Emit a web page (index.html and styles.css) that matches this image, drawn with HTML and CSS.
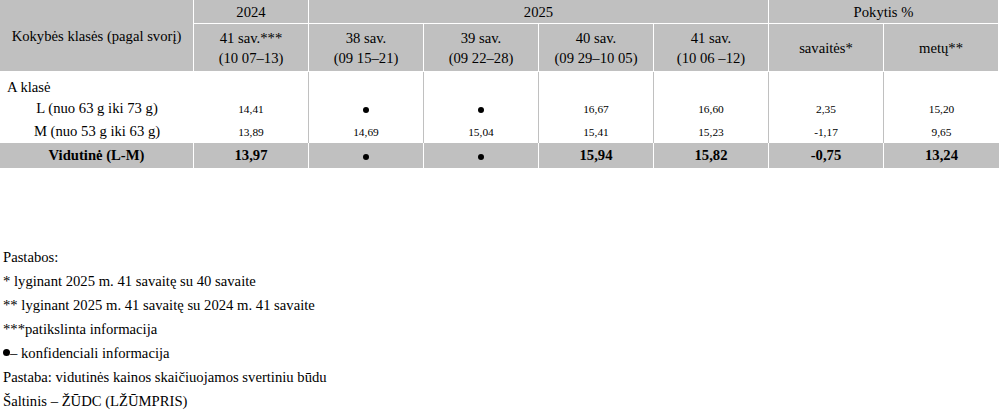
FILE: index.html
```html
<!DOCTYPE html>
<html lang="lt">
<head>
    <meta charset="UTF-8">
    <meta name="viewport" content="width=device-width, initial-scale=1.0">
    <title>Kiaušinių kainos</title>
    <link rel="stylesheet" href="styles.css">
</head>
<body>
    <table class="price-table">
        <colgroup>
            <col class="col-label">
            <col class="col-num"><col class="col-num"><col class="col-num"><col class="col-num">
            <col class="col-num"><col class="col-num"><col class="col-num">
        </colgroup>
        <thead>
            <tr class="head-years">
                <th rowspan="2">Kokybės klasės (pagal svorį)</th>
                <th>2024</th>
                <th colspan="4">2025</th>
                <th colspan="2">Pokytis %</th>
            </tr>
            <tr class="head-weeks">
                <th>41 sav.***<br>(10 07–13)</th>
                <th>38 sav.<br>(09 15–21)</th>
                <th>39 sav.<br>(09 22–28)</th>
                <th>40 sav.<br>(09 29–10 05)</th>
                <th>41 sav.<br>(10 06 –12)</th>
                <th>savaitės*</th>
                <th>metų**</th>
            </tr>
        </thead>
        <tbody>
            <tr class="group-row">
                <td class="group-label">A klasė</td>
                <td></td><td></td><td></td><td></td><td></td><td></td><td></td>
            </tr>
            <tr>
                <td class="row-label">L (nuo 63 g iki 73 g)</td>
                <td>14,41</td>
                <td><span class="dot"></span></td>
                <td><span class="dot"></span></td>
                <td>16,67</td>
                <td>16,60</td>
                <td>2,35</td>
                <td>15,20</td>
            </tr>
            <tr>
                <td class="row-label">M (nuo 53 g iki 63 g)</td>
                <td>13,89</td>
                <td>14,69</td>
                <td>15,04</td>
                <td>15,41</td>
                <td>15,23</td>
                <td>-1,17</td>
                <td>9,65</td>
            </tr>
        </tbody>
        <tfoot>
            <tr>
                <td>Vidutinė (L-M)</td>
                <td>13,97</td>
                <td><span class="dot"></span></td>
                <td><span class="dot"></span></td>
                <td>15,94</td>
                <td>15,82</td>
                <td>-0,75</td>
                <td>13,24</td>
            </tr>
        </tfoot>
    </table>

    <div class="notes">
        <p>Pastabos:</p>
        <p>* lyginant 2025 m. 41 savaitę su 40 savaite</p>
        <p>** lyginant 2025 m. 41 savaitę su 2024 m. 41 savaite</p>
        <p>***patikslinta informacija</p>
        <p><span class="dot dot-note"></span>– konfidenciali informacija</p>
        <p>Pastaba: vidutinės kainos skaičiuojamos svertiniu būdu</p>
        <p>Šaltinis – ŽŪDC (LŽŪMPRIS)</p>
    </div>
</body>
</html>
```

FILE: styles.css
```css
body {
    margin: 0;
    font-family: 'Liberation Serif', 'Times New Roman', serif;
    color: #000;
    background: #fff;
}

.price-table {
    width: 999px;
    table-layout: fixed;
    border-collapse: separate;
    border-spacing: 0;
}

.col-label {
    width: 194px;
}

.col-num {
    width: 115px;
}

.price-table th,
.price-table td {
    padding: 0;
    text-align: center;
    font-weight: normal;
}

.price-table th {
    background-color: #c0c0c0;
    border-right: 1px solid #fff;
    border-bottom: 1px solid #fff;
    font-size: 14.67px;
    line-height: 20px;
}

.head-years th {
    height: 23px;
}

.head-weeks th {
    height: 47px;
}

.price-table tbody td {
    border-right: 1px solid #c0c0c0;
    font-size: 11.4px;
    height: 23px;
    vertical-align: middle;
}

.price-table tbody td:first-child,
.price-table tbody td:last-child {
    border-right: none;
}

.price-table tbody .group-row td {
    height: 25px;
    vertical-align: bottom;
}

.price-table td.group-label {
    text-align: left;
    padding-left: 7px;
    font-size: 14.67px;
    line-height: 20px;
}

.price-table td.row-label {
    font-size: 14.67px;
}

.price-table tfoot td {
    background-color: #c0c0c0;
    border-right: 1px solid #fff;
    font-weight: bold;
    font-size: 14.67px;
    height: 25px;
}

.price-table tfoot td:last-child {
    border-right: none;
}

.dot {
    display: inline-block;
    width: 6px;
    height: 6px;
    border-radius: 50%;
    background: #000;
    vertical-align: middle;
}

.notes {
    margin-top: 77px;
    padding-left: 3px;
    font-size: 14.67px;
}

.notes p {
    margin: 0;
    height: 24px;
    line-height: 24px;
}

.dot-note {
    width: 7px;
    height: 7px;
    vertical-align: 2px;
}
```
